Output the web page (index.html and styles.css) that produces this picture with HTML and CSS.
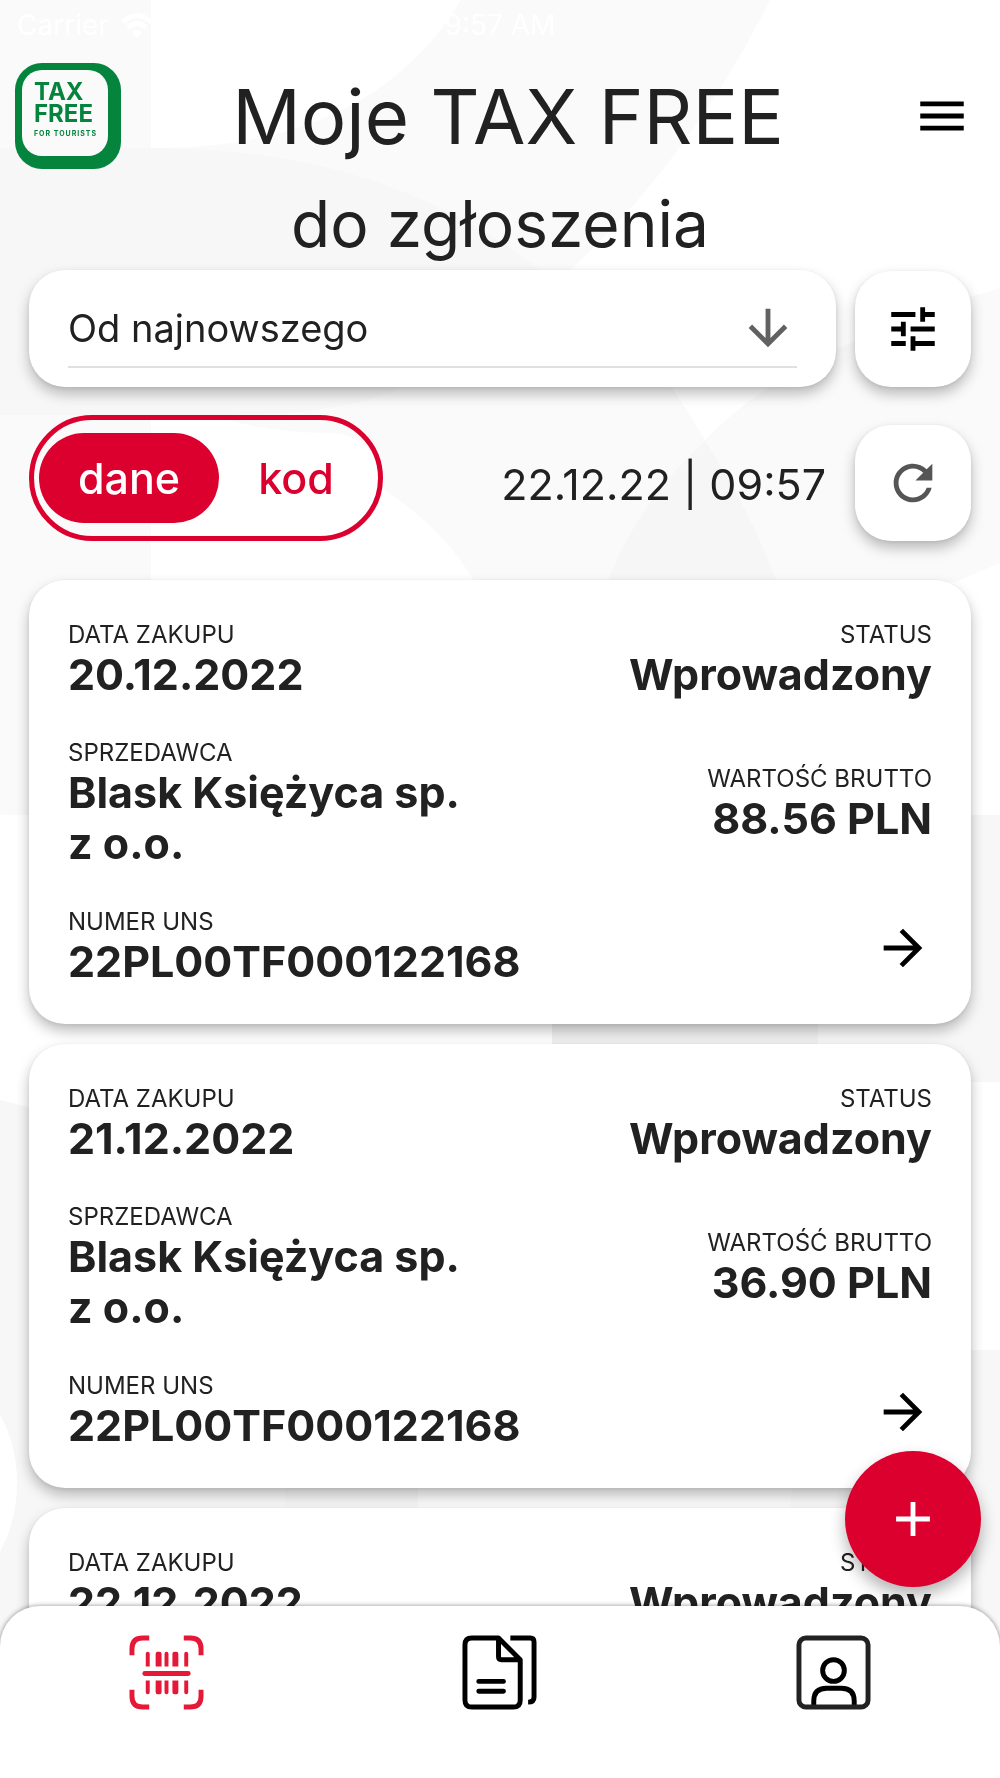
FILE: index.html
```html
<!DOCTYPE html>
<html lang="pl">
<head>
<meta charset="utf-8">
<meta name="viewport" content="width=device-width, initial-scale=1">
<title>Moje TAX FREE</title>
<link rel="stylesheet" href="styles.css">
</head>
<body>
<svg class="backdrop" viewBox="0 0 1000 1778" preserveAspectRatio="none" aria-hidden="true">
  <rect width="1000" height="1778" fill="#fff"/>
  <path d="M0 0H151V148H0Z" fill="#fafafa"/>
  <path d="M461 0H770Q690 160 570 270Q640 330 705 440Q790 350 1000 288V563L955 582H475Q440 525 384 490Q376 434 330 433Q270 433 220 418L151 415V580H0V148H151Q370 150 461 0Z" fill="#fafafa"/>
  <path d="M0 148H151C330 148 450 200 540 270C440 420 300 415 200 415H0Z" fill="#f7f7f7"/>
  <path d="M705 441Q750 510 776 580H608Q640 500 705 441Z" fill="#f6f6f6"/>
  <path d="M0 580H151V815H0Z" fill="#fafafa"/>
  <path d="M552 815H1000V1082H552Z" fill="#f7f7f7"/>
  <path d="M552 1000H818V1060H552Z" fill="#f0f0f0"/>
  <path d="M0 1100L40 1110V1350H1000V1778H0V1552Q17 1520 17 1482Q17 1445 0 1415Z" fill="#f7f7f7"/>
  <path d="M285 1480H418V1520H285Z" fill="#f5f5f5"/>
  <path d="M418 1480H794L788 1520H418Z" fill="#fafafa"/>
</svg>

<div class="status-bar">
  <span class="carrier">Carrier
    <svg width="32" height="26" viewBox="0 0 32 26" aria-hidden="true"><g fill="none" stroke="#fff" stroke-width="5"><path d="M2 10Q16-3 30 10"/><path d="M7 16Q16 7 25 16"/></g><path d="M11 20Q16 16 21 20L16 26Z" fill="#fff"/></svg>
  </span>
  <span>9:57 AM</span>
</div>

<header class="header">
  <svg class="logo" width="106" height="106" viewBox="0 0 106 106" role="img" aria-label="Tax Free for tourists">
    <rect width="106" height="106" rx="27" fill="#04843d"/>
    <rect x="7" y="7" width="86" height="86" rx="20" fill="#fafafa"/>
    <text x="19" y="37" class="logo-name">TAX</text>
    <text x="19" y="59" class="logo-name">FREE</text>
    <text x="19" y="73" class="logo-note">FOR TOURISTS</text>
  </svg>
  <h1>Moje TAX FREE</h1>
  <button class="icon-button" type="button" aria-label="Menu">
    <svg class="icon" viewBox="0 0 24 24"><path d="M3 18h18v-2H3v2zm0-5h18v-2H3v2zm0-7v2h18V6H3z"/></svg>
  </button>
</header>

<main class="content">
  <h2>do zgłoszenia</h2>

  <div class="row">
    <div class="tile sort">
      <select aria-label="Sortowanie">
        <option>Od najnowszego</option>
        <option>Od najstarszego</option>
      </select>
      <svg class="icon sort-arrow" viewBox="0 0 24 24" aria-hidden="true"><path d="M20 12l-1.41-1.41L13 16.17V4h-2v12.17l-5.58-5.59L4 12l8 8 8-8z"/></svg>
    </div>
    <button class="tile square" type="button" aria-label="Filtry">
      <svg class="icon" viewBox="0 0 24 24"><path d="M3 17v2h6v-2H3zM3 5v2h10V5H3zm10 16v-2h8v-2h-8v-2h-2v6h2zM7 9v2H3v2h4v2h2V9H7zm14 4v-2H11v2h10zm-6-4h2V7h4V5h-4V3h-2v6z"/></svg>
    </button>
  </div>

  <div class="row view-row">
    <div class="toggle" role="group" aria-label="Widok">
      <button class="toggle-item active" type="button" aria-pressed="true">dane</button>
      <button class="toggle-item" type="button" aria-pressed="false">kod</button>
    </div>
    <time class="updated" datetime="2022-12-22T09:57">22.12.22 | 09:57</time>
    <button class="tile square muted" type="button" aria-label="Odśwież">
      <svg class="icon" viewBox="0 0 24 24"><path d="M17.65 6.35C16.2 4.9 14.21 4 12 4c-4.42 0-7.99 3.58-7.99 8s3.57 8 7.99 8c3.73 0 6.84-2.55 7.73-6h-2.08c-.82 2.33-3.04 4-5.65 4-3.31 0-6-2.69-6-6s2.69-6 6-6c1.66 0 3.14.69 4.22 1.78L13 11h7V4l-2.35 2.35z"/></svg>
    </button>
  </div>

  <div class="cards">
    <article class="tile card">
      <div class="field"><span>DATA ZAKUPU</span><strong>20.12.2022</strong></div>
      <div class="field end"><span>STATUS</span><strong>Wprowadzony</strong></div>
      <div class="field"><span>SPRZEDAWCA</span><strong>Blask Księżyca sp. z&nbsp;o.o.</strong></div>
      <div class="field end"><span>WARTOŚĆ BRUTTO</span><strong>88.56 PLN</strong></div>
      <div class="field"><span>NUMER UNS</span><strong>22PL00TF000122168</strong></div>
      <a class="open" href="#" aria-label="Szczegóły"><svg class="icon" viewBox="0 0 24 24"><path d="M12 4l-1.41 1.41L16.17 11H4v2h12.17l-5.58 5.59L12 20l8-8z"/></svg></a>
    </article>
    <article class="tile card">
      <div class="field"><span>DATA ZAKUPU</span><strong>21.12.2022</strong></div>
      <div class="field end"><span>STATUS</span><strong>Wprowadzony</strong></div>
      <div class="field"><span>SPRZEDAWCA</span><strong>Blask Księżyca sp. z&nbsp;o.o.</strong></div>
      <div class="field end"><span>WARTOŚĆ BRUTTO</span><strong>36.90 PLN</strong></div>
      <div class="field"><span>NUMER UNS</span><strong>22PL00TF000122168</strong></div>
      <a class="open" href="#" aria-label="Szczegóły"><svg class="icon" viewBox="0 0 24 24"><path d="M12 4l-1.41 1.41L16.17 11H4v2h12.17l-5.58 5.59L12 20l8-8z"/></svg></a>
    </article>
    <article class="tile card">
      <div class="field"><span>DATA ZAKUPU</span><strong>22.12.2022</strong></div>
      <div class="field end"><span>STATUS</span><strong>Wprowadzony</strong></div>
    </article>
  </div>
</main>

<button class="fab" type="button" aria-label="Dodaj">
  <svg class="icon" viewBox="0 0 24 24"><path d="M19 13h-6v6h-2v-6H5v-2h6V5h2v6h6v2z"/></svg>
</button>

<nav class="tabs" aria-label="Główna">
  <a href="#" aria-label="Kody" aria-current="page">
    <svg width="75" height="75" viewBox="0 0 76 76" fill="none" stroke="#e51937">
      <path stroke-width="5" d="M20.500 3H14Q3 3 3 14V20.500M55.500 3H62Q73 3 73 14V20.500M20.500 73H14Q3 73 3 62V55.500M55.500 73H62Q73 73 73 62V55.500"/>
      <path stroke-width="5" stroke-linecap="round" d="M16 39H60"/>
      <g fill="#e51937" stroke="none">
        <path d="M17 32V19Q17 17 19 17T21 19V32ZM27 32V19Q27 17 29 17H31Q33 17 33 19V32ZM36 32V19Q36 17 38 17T40 19V32ZM44 32V19Q44 17 46 17H48Q50 17 50 19V32ZM56 32V19Q56 17 58 17T60 19V32Z"/>
        <path d="M17 46V58Q17 60 19 60T21 58V46ZM27 46V58Q27 60 29 60H31Q33 60 33 58V46ZM36 46V58Q36 60 38 60T40 58V46ZM44 46V58Q44 60 46 60H48Q50 60 50 58V46ZM56 46V58Q56 60 58 60T60 58V46Z"/>
      </g>
    </svg>
  </a>
  <a href="#" aria-label="Dokumenty">
    <svg width="75" height="75" viewBox="0 0 76 76" fill="none" stroke="#000" stroke-width="5">
      <path stroke-linejoin="round" d="M37 3H10Q3 3 3 10V66Q3 73 10 73H52Q59 73 59 66V25ZM37 3V22Q37 25 40 25H59"/>
      <path d="M49 3H69Q73 3 73 7V63Q73 68 67 68"/>
      <path stroke-linecap="round" d="M17 47H42M17 57H42"/>
    </svg>
  </a>
  <a href="#" aria-label="Profil">
    <svg width="75" height="75" viewBox="0 0 76 76" fill="none" stroke="#000" stroke-width="5">
      <circle cx="38" cy="36" r="11"/>
      <path d="M18 71V67Q18 54 31 54H46Q59 54 59 67V71"/>
      <rect x="3" y="3" width="70" height="70" rx="7" stroke="#222"/>
    </svg>
  </a>
</nav>
</body>
</html>
```
FILE: styles.css
```css
:root {
  --red: #dc002e;
  --ink: #212121;
  --edge: 29px;
}

* {
  box-sizing: border-box;
}

body {
  margin: 0;
  height: 100vh;
  overflow: hidden;
  color: var(--ink);
  font-family: Inter, "Liberation Sans", sans-serif;
}

button,
select {
  margin: 0;
  border: 0;
  padding: 0;
  background: none;
  color: inherit;
  font: inherit;
}

.backdrop {
  position: fixed;
  inset: 0;
  z-index: -1;
  width: 100%;
  height: 100%;
}

.icon {
  display: block;
  width: 58px;
  height: 58px;
  flex: none;
  fill: currentColor;
}

.status-bar {
  display: grid;
  grid-template-columns: 1fr auto 1fr;
  align-items: center;
  height: 50px;
  padding: 0 17px;
  color: #fff;
  font-size: 28px;
}

.carrier {
  display: flex;
  align-items: center;
  gap: 12px;
}

.header {
  display: flex;
  align-items: center;
  justify-content: space-between;
  padding: 13px 29px 0 15px;
}

.logo-name {
  fill: #04843d;
  font-size: 24px;
  font-weight: 700;
}

.logo-note {
  fill: #04843d;
  font-size: 7px;
  font-weight: 700;
  letter-spacing: 1px;
}

h1,
h2 {
  margin: 0;
  font-weight: 400;
  text-align: center;
}

h1 {
  font-size: 76px;
  line-height: 92px;
}

h2 {
  font-size: 64px;
  line-height: 78px;
  padding: 16px 0 7px;
}

.icon-button {
  padding-left: 18px;
  color: #000;
}

.content {
  padding: 0 var(--edge);
}

.row {
  display: flex;
  align-items: center;
  gap: 19px;
}

.tile {
  border-radius: 36px;
  background: #fff;
  box-shadow: 0 7px 14px rgba(0, 0, 0, .26), 0 1px 4px rgba(0, 0, 0, .08);
}

.sort {
  position: relative;
  flex: 1;
  height: 117px;
  padding: 20px 39px 19px;
}

.sort select {
  width: 100%;
  height: 78px;
  border-bottom: 2px solid #e0e0e0;
  appearance: none;
  font-size: 38px;
}

.sort-arrow {
  position: absolute;
  top: 29px;
  right: 39px;
  color: #616161;
  pointer-events: none;
}

.square {
  display: grid;
  place-items: center;
  width: 116px;
  height: 116px;
  color: #000;
}

.muted {
  color: #555;
}

.view-row {
  align-items: flex-end;
  margin-top: 28px;
}

.toggle {
  display: flex;
  align-items: center;
  height: 126px;
  padding: 0 5px;
  border: 5px solid var(--red);
  border-radius: 63px;
}

.toggle-item {
  height: 90px;
  padding: 0 39px;
  border-radius: 45px;
  color: var(--red);
  font-size: 43px;
  font-weight: 500;
}

.toggle-item.active {
  background: var(--red);
  color: #fff;
}

.updated {
  margin-left: auto;
  padding: 0 10px;
  font-size: 43px;
  line-height: 114px;
}

.cards {
  display: grid;
  gap: 20px;
  margin-top: 39px;
}

.card {
  display: grid;
  grid-template-columns: 1fr auto;
  align-items: center;
  gap: 39px 16px;
  padding: 41px 39px 37px;
}

.field {
  display: grid;
  max-width: 480px;
}

.field span {
  font-size: 24px;
  line-height: 28px;
}

.field strong {
  font-size: 43px;
  font-weight: 700;
  line-height: 51px;
}

.end {
  text-align: right;
}

.open {
  justify-self: end;
  color: #000;
}

.fab {
  position: fixed;
  right: 19px;
  bottom: 191px;
  display: grid;
  place-items: center;
  width: 136px;
  height: 136px;
  border-radius: 50%;
  background: var(--red);
  color: #fff;
  box-shadow: 0 8px 16px rgba(0, 0, 0, .3);
}

.tabs {
  position: fixed;
  right: 0;
  bottom: 0;
  left: 0;
  display: grid;
  grid-template-columns: repeat(3, 1fr);
  justify-items: center;
  height: 172px;
  padding-top: 29px;
  border-radius: 40px 40px 0 0;
  background: #fff;
  box-shadow: 0 0 5px rgba(0, 0, 0, .45);
}
```
